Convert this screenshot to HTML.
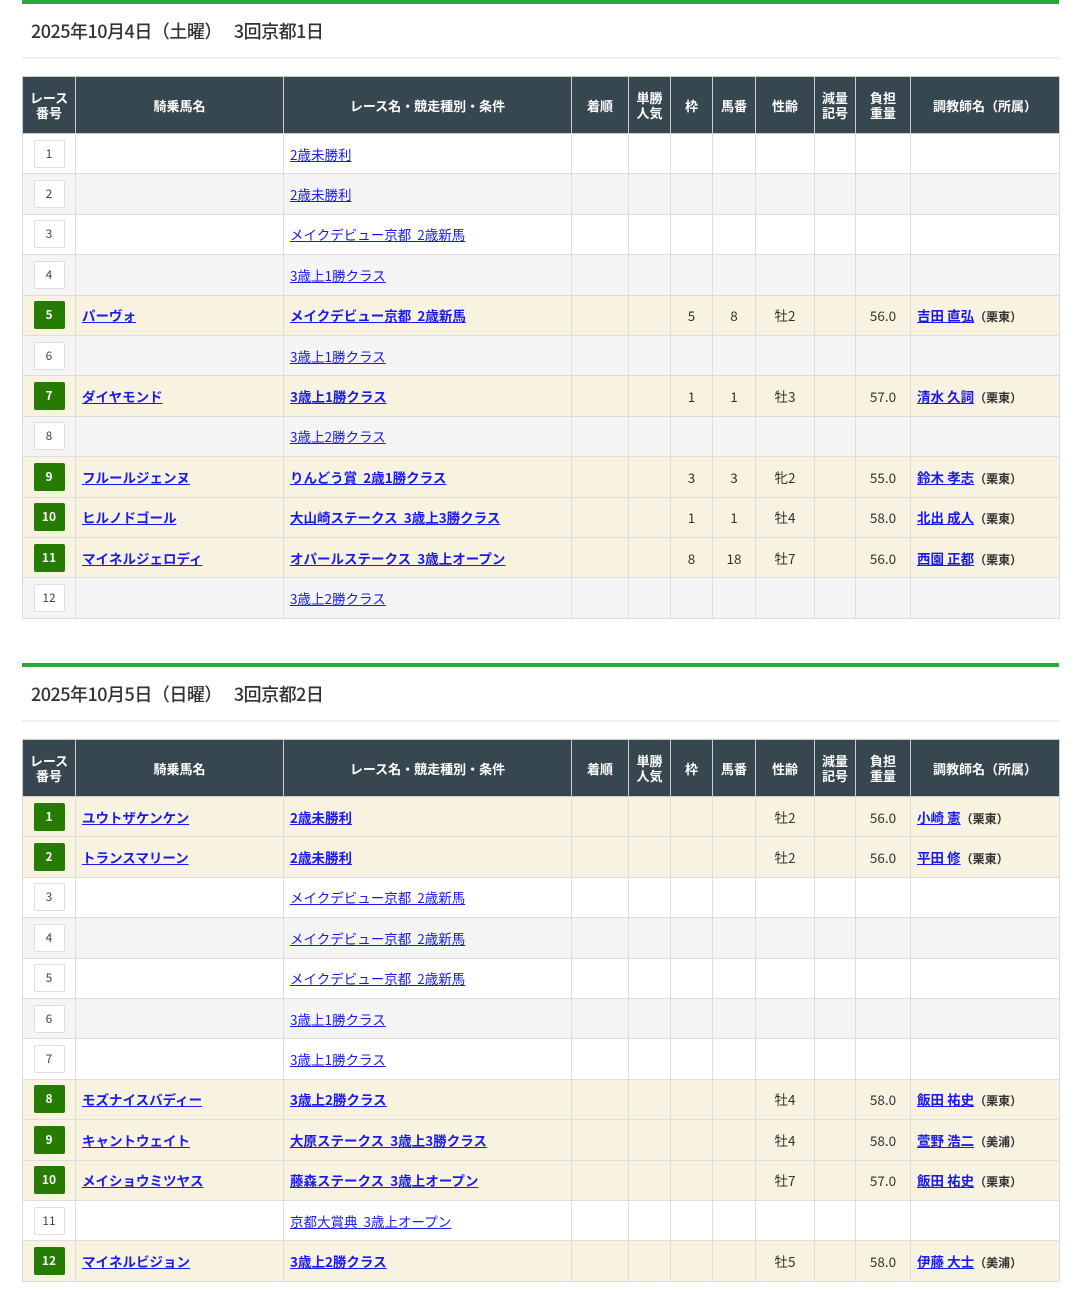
<!DOCTYPE html>
<html><head><meta charset="utf-8"><style>
body{margin:0;background:#fff;font-family:"Liberation Sans","Noto Sans CJK JP",sans-serif;color:#333;}
.sec{position:absolute;left:22px;width:1037px;}
.bar{height:4px;background:#2aa83a;}
.ttl{height:53px;line-height:54px;font-size:18px;padding-left:9px;border-bottom:2px solid #eee;font-family:"Noto Sans CJK JP",sans-serif;letter-spacing:-0.5px;font-weight:500;}
table{position:absolute;left:0;border-collapse:collapse;table-layout:fixed;width:1037px;font-size:13.5px;font-family:"Noto Sans CJK JP",sans-serif;}
th{background:#37474f;color:#fff;font-weight:bold;font-size:13px;line-height:15px;border:1px solid #ccc;height:56px;padding:0;text-align:center;}
td{border:1px solid #ddd;height:39.4px;padding:0;text-align:center;}
tr:nth-child(odd) td{background:#f5f5f5;}
tr.h td{background:#f8f3e0 !important;}
td.l{text-align:left;padding-left:6px;}
a{color:#1a1aee;text-decoration:underline;}
tr.h a{font-weight:bold;}
.n{display:inline-block;width:29px;height:26px;line-height:26px;border:1px solid #ddd;border-radius:2px;background:#fff;font-size:12px;color:#444;}
tr.h .n{background:#267c00;border-color:#267c00;color:#fff;font-weight:bold;}
small{font-size:12px;color:#333;font-weight:bold;}
</style></head><body>
<div class="sec" style="top:0"><div class="bar"></div><div class="ttl">2025年10月4日（土曜）　 3回京都1日</div>
<table style="top:76px">
<colgroup><col style="width:53px"><col style="width:208px"><col style="width:288px"><col style="width:57px"><col style="width:42px"><col style="width:42px"><col style="width:43px"><col style="width:59px"><col style="width:41px"><col style="width:55px"><col style="width:149px"></colgroup>
<tr><th>レース<br>番号</th><th>騎乗馬名</th><th>レース名・競走種別・条件</th><th>着順</th><th>単勝<br>人気</th><th>枠</th><th>馬番</th><th>性齢</th><th>減量<br>記号</th><th>負担<br>重量</th><th>調教師名（所属）</th></tr>
<tr><td><span class="n">1</span></td><td></td><td class="l"><a>2歳未勝利</a></td><td></td><td></td><td></td><td></td><td></td><td></td><td></td><td></td></tr>
<tr><td><span class="n">2</span></td><td></td><td class="l"><a>2歳未勝利</a></td><td></td><td></td><td></td><td></td><td></td><td></td><td></td><td></td></tr>
<tr><td><span class="n">3</span></td><td></td><td class="l"><a>メイクデビュー京都&nbsp;&nbsp;2歳新馬</a></td><td></td><td></td><td></td><td></td><td></td><td></td><td></td><td></td></tr>
<tr><td><span class="n">4</span></td><td></td><td class="l"><a>3歳上1勝クラス</a></td><td></td><td></td><td></td><td></td><td></td><td></td><td></td><td></td></tr>
<tr class="h"><td><span class="n">5</span></td><td class="l"><a>パーヴォ</a></td><td class="l"><a>メイクデビュー京都&nbsp;&nbsp;2歳新馬</a></td><td></td><td></td><td>5</td><td>8</td><td>牡2</td><td></td><td>56.0</td><td class="l"><a>吉田 直弘</a><small>（栗東）</small></td></tr>
<tr><td><span class="n">6</span></td><td></td><td class="l"><a>3歳上1勝クラス</a></td><td></td><td></td><td></td><td></td><td></td><td></td><td></td><td></td></tr>
<tr class="h"><td><span class="n">7</span></td><td class="l"><a>ダイヤモンド</a></td><td class="l"><a>3歳上1勝クラス</a></td><td></td><td></td><td>1</td><td>1</td><td>牡3</td><td></td><td>57.0</td><td class="l"><a>清水 久詞</a><small>（栗東）</small></td></tr>
<tr><td><span class="n">8</span></td><td></td><td class="l"><a>3歳上2勝クラス</a></td><td></td><td></td><td></td><td></td><td></td><td></td><td></td><td></td></tr>
<tr class="h"><td><span class="n">9</span></td><td class="l"><a>フルールジェンヌ</a></td><td class="l"><a>りんどう賞&nbsp;&nbsp;2歳1勝クラス</a></td><td></td><td></td><td>3</td><td>3</td><td>牝2</td><td></td><td>55.0</td><td class="l"><a>鈴木 孝志</a><small>（栗東）</small></td></tr>
<tr class="h"><td><span class="n">10</span></td><td class="l"><a>ヒルノドゴール</a></td><td class="l"><a>大山崎ステークス&nbsp;&nbsp;3歳上3勝クラス</a></td><td></td><td></td><td>1</td><td>1</td><td>牡4</td><td></td><td>58.0</td><td class="l"><a>北出 成人</a><small>（栗東）</small></td></tr>
<tr class="h"><td><span class="n">11</span></td><td class="l"><a>マイネルジェロディ</a></td><td class="l"><a>オパールステークス&nbsp;&nbsp;3歳上オープン</a></td><td></td><td></td><td>8</td><td>18</td><td>牡7</td><td></td><td>56.0</td><td class="l"><a>西園 正都</a><small>（栗東）</small></td></tr>
<tr><td><span class="n">12</span></td><td></td><td class="l"><a>3歳上2勝クラス</a></td><td></td><td></td><td></td><td></td><td></td><td></td><td></td><td></td></tr>
</table></div>
<div class="sec" style="top:663px"><div class="bar"></div><div class="ttl">2025年10月5日（日曜）　 3回京都2日</div>
<table style="top:76px">
<colgroup><col style="width:53px"><col style="width:208px"><col style="width:288px"><col style="width:57px"><col style="width:42px"><col style="width:42px"><col style="width:43px"><col style="width:59px"><col style="width:41px"><col style="width:55px"><col style="width:149px"></colgroup>
<tr><th>レース<br>番号</th><th>騎乗馬名</th><th>レース名・競走種別・条件</th><th>着順</th><th>単勝<br>人気</th><th>枠</th><th>馬番</th><th>性齢</th><th>減量<br>記号</th><th>負担<br>重量</th><th>調教師名（所属）</th></tr>
<tr class="h"><td><span class="n">1</span></td><td class="l"><a>ユウトザケンケン</a></td><td class="l"><a>2歳未勝利</a></td><td></td><td></td><td></td><td></td><td>牡2</td><td></td><td>56.0</td><td class="l"><a>小崎 憲</a><small>（栗東）</small></td></tr>
<tr class="h"><td><span class="n">2</span></td><td class="l"><a>トランスマリーン</a></td><td class="l"><a>2歳未勝利</a></td><td></td><td></td><td></td><td></td><td>牡2</td><td></td><td>56.0</td><td class="l"><a>平田 修</a><small>（栗東）</small></td></tr>
<tr><td><span class="n">3</span></td><td></td><td class="l"><a>メイクデビュー京都&nbsp;&nbsp;2歳新馬</a></td><td></td><td></td><td></td><td></td><td></td><td></td><td></td><td></td></tr>
<tr><td><span class="n">4</span></td><td></td><td class="l"><a>メイクデビュー京都&nbsp;&nbsp;2歳新馬</a></td><td></td><td></td><td></td><td></td><td></td><td></td><td></td><td></td></tr>
<tr><td><span class="n">5</span></td><td></td><td class="l"><a>メイクデビュー京都&nbsp;&nbsp;2歳新馬</a></td><td></td><td></td><td></td><td></td><td></td><td></td><td></td><td></td></tr>
<tr><td><span class="n">6</span></td><td></td><td class="l"><a>3歳上1勝クラス</a></td><td></td><td></td><td></td><td></td><td></td><td></td><td></td><td></td></tr>
<tr><td><span class="n">7</span></td><td></td><td class="l"><a>3歳上1勝クラス</a></td><td></td><td></td><td></td><td></td><td></td><td></td><td></td><td></td></tr>
<tr class="h"><td><span class="n">8</span></td><td class="l"><a>モズナイスバディー</a></td><td class="l"><a>3歳上2勝クラス</a></td><td></td><td></td><td></td><td></td><td>牡4</td><td></td><td>58.0</td><td class="l"><a>飯田 祐史</a><small>（栗東）</small></td></tr>
<tr class="h"><td><span class="n">9</span></td><td class="l"><a>キャントウェイト</a></td><td class="l"><a>大原ステークス&nbsp;&nbsp;3歳上3勝クラス</a></td><td></td><td></td><td></td><td></td><td>牡4</td><td></td><td>58.0</td><td class="l"><a>萱野 浩二</a><small>（美浦）</small></td></tr>
<tr class="h"><td><span class="n">10</span></td><td class="l"><a>メイショウミツヤス</a></td><td class="l"><a>藤森ステークス&nbsp;&nbsp;3歳上オープン</a></td><td></td><td></td><td></td><td></td><td>牡7</td><td></td><td>57.0</td><td class="l"><a>飯田 祐史</a><small>（栗東）</small></td></tr>
<tr><td><span class="n">11</span></td><td></td><td class="l"><a>京都大賞典&nbsp;&nbsp;3歳上オープン</a></td><td></td><td></td><td></td><td></td><td></td><td></td><td></td><td></td></tr>
<tr class="h"><td><span class="n">12</span></td><td class="l"><a>マイネルビジョン</a></td><td class="l"><a>3歳上2勝クラス</a></td><td></td><td></td><td></td><td></td><td>牡5</td><td></td><td>58.0</td><td class="l"><a>伊藤 大士</a><small>（美浦）</small></td></tr>
</table></div>
</body></html>
